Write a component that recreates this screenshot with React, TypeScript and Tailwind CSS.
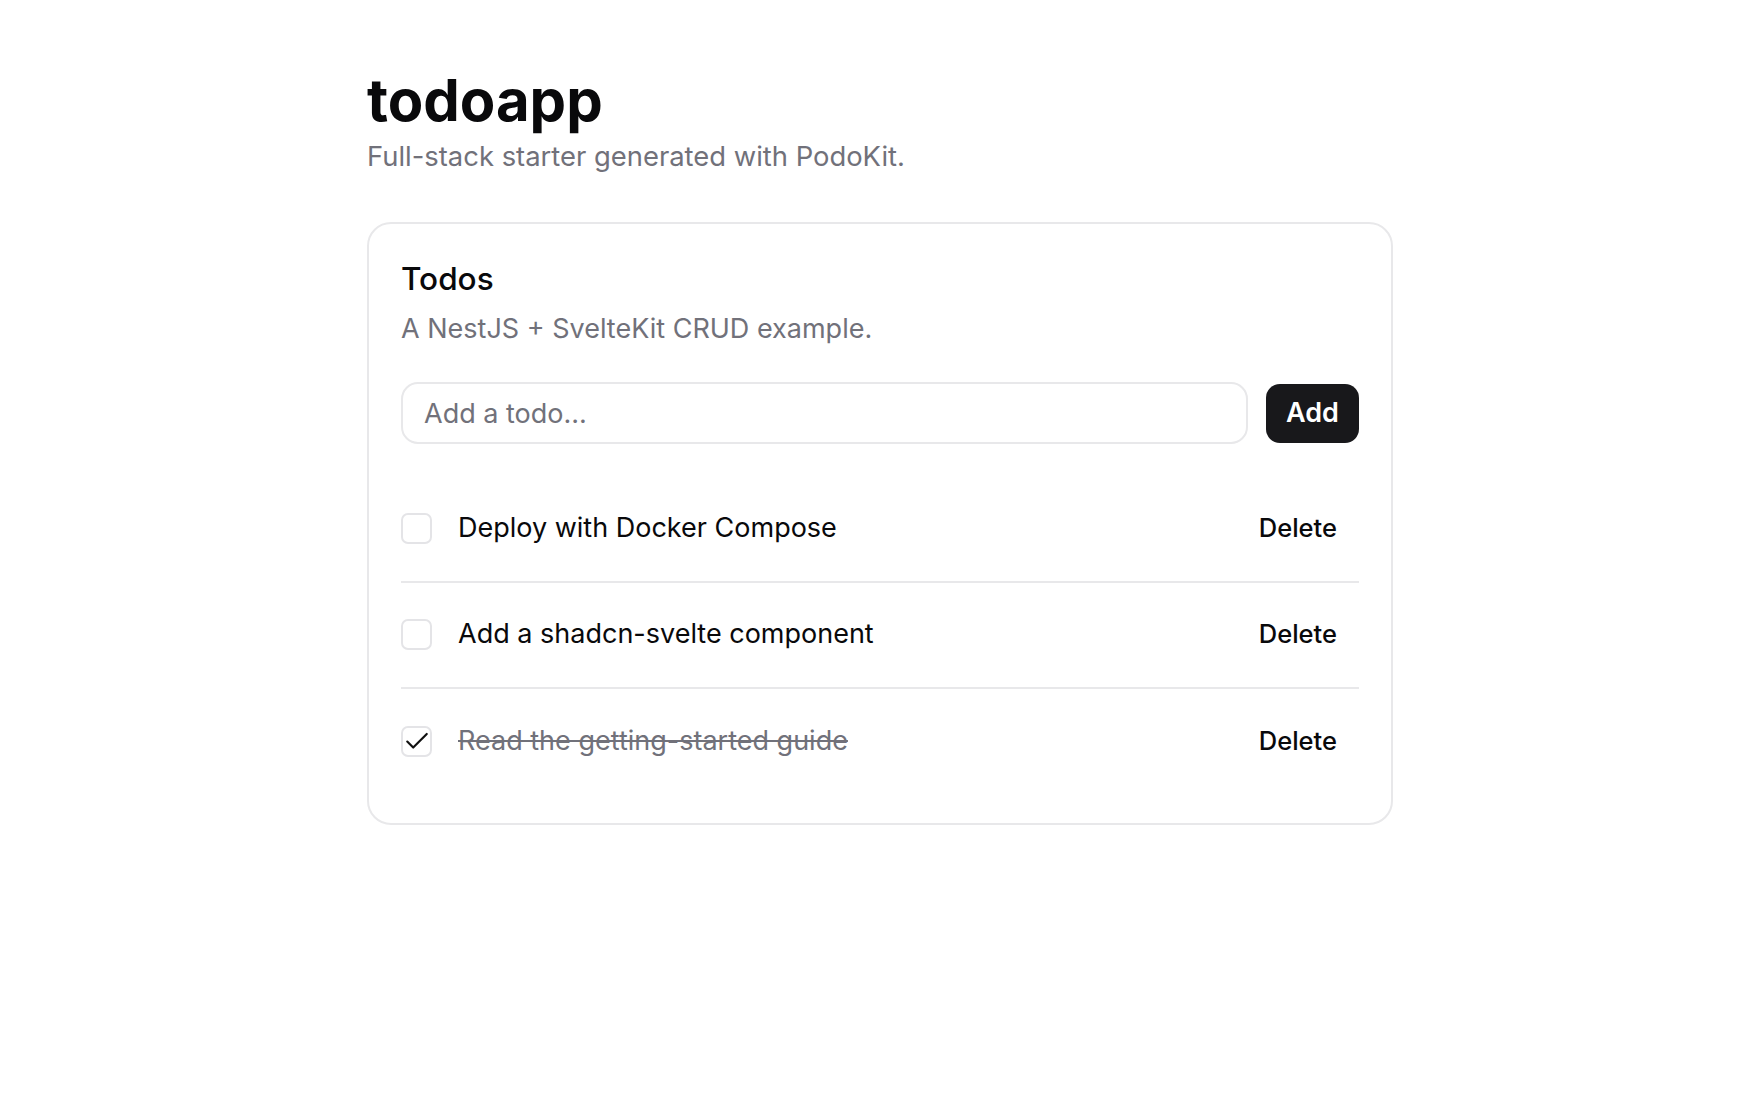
import React, { useState } from "react";

type Todo = { id: number; title: string; done: boolean };

function CheckIcon() {
  return (
    <svg width="26" height="26" viewBox="0 0 24 24" fill="none" stroke="#111111" strokeWidth="2" strokeLinecap="round" strokeLinejoin="round">
      <path d="M3 12.5l5.5 5.5L21 5.5" />
    </svg>
  );
}

export default function App() {
  const [todos, setTodos] = useState<Todo[]>([
    { id: 1, title: "Deploy with Docker Compose", done: false },
    { id: 2, title: "Add a shadcn-svelte component", done: false },
    { id: 3, title: "Read the getting-started guide", done: true },
  ]);
  const [text, setText] = useState("");

  const add = () => {
    if (!text.trim()) return;
    setTodos((t) => [...t, { id: Date.now(), title: text.trim(), done: false }]);
    setText("");
  };

  return (
    <div className="min-h-[1120px] w-full bg-white text-[#09090b]" style={{ fontFamily: "Inter, 'Noto Sans', sans-serif" }}>
      <div className="mx-auto w-[1026px] pt-[71px]">
        <h1 className="text-[58px] font-bold leading-[58px] text-[#09090b]">todoapp</h1>
        <p className="mt-[9px] text-[27.4px] leading-[36px] text-[#71717a]">Full-stack starter generated with PodoKit.</p>

        <div className="mt-[48px] rounded-[24px] border-2 border-[#e8e8ea] bg-white px-[32px] pt-[35px] pb-[30px]">
          <h2 className="text-[31.5px] font-medium leading-[40px] text-[#09090b]">Todos</h2>
          <p className="mt-[12px] text-[27px] leading-[36px] text-[#71717a]">A NestJS + SvelteKit CRUD example.</p>

          <div className="mt-[35px] flex items-center gap-[18px]">
            <input
              value={text}
              onChange={(e) => setText(e.target.value)}
              placeholder="Add a todo..."
              className="h-[62px] flex-1 rounded-[17px] border-2 border-[#e8e8ea] bg-white px-[21px] text-[27px] text-[#09090b] outline-none placeholder:text-[#71717a]"
            />
            <button
              onClick={add}
              className="h-[59px] w-[93px] rounded-[14px] bg-[#18181b] text-[27px] font-semibold text-white"
            >
              Add
            </button>
          </div>

          <ul className="mt-[33px]">
            {todos.map((t, i) => {
              const last = i === todos.length - 1;
              return (
                <li
                  key={t.id}
                  className={"flex items-center " + (last ? "h-[104px]" : "h-[106px] border-b-2 border-[#e8e8ea] pb-[2px]")}
                >
                  <button
                    onClick={() => setTodos((all) => all.map((x) => (x.id === t.id ? { ...x, done: !x.done } : x)))}
                    className="flex h-[31px] w-[31px] shrink-0 items-center justify-center rounded-[7px] border-2 border-[#e4e4e7] bg-white"
                  >
                    {t.done ? <CheckIcon /> : null}
                  </button>
                  <span
                    className={
                      "ml-[26px] flex-1 text-[27px] leading-[32px] " +
                      (t.done ? "text-[#71717a] line-through decoration-[#71717a]" : "text-[#09090b]")
                    }
                  >
                    {t.title}
                  </span>
                  <button
                    onClick={() => setTodos((all) => all.filter((x) => x.id !== t.id))}
                    className="px-[22px] py-[12px] text-[25.5px] font-medium text-[#09090b]"
                  >
                    Delete
                  </button>
                </li>
              );
            })}
          </ul>
        </div>
      </div>
    </div>
  );
}
